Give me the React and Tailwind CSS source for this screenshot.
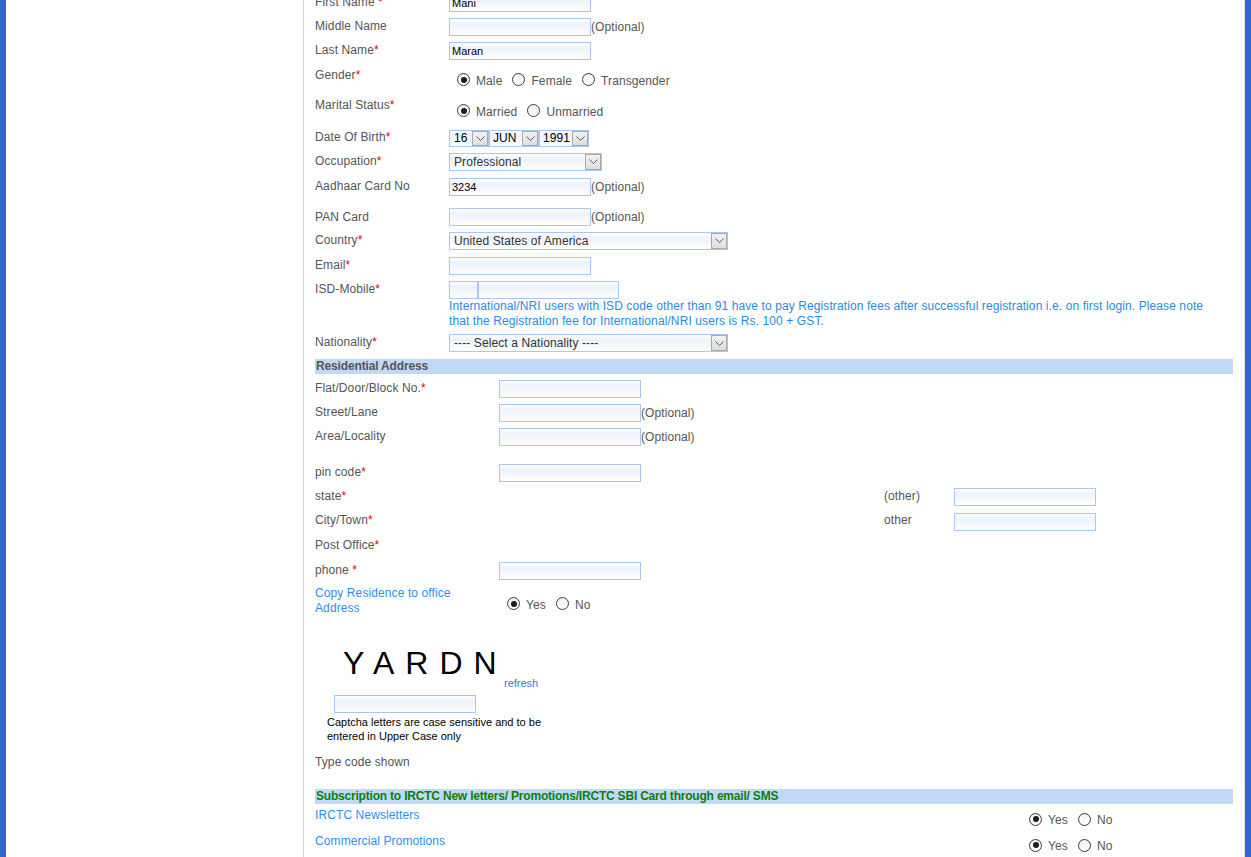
import React from 'react';

const Req = () => <span className="text-[#e60000]">*</span>;

const Input = ({ value = '', className = 'w-[142px]' }) => (
    <div className={`h-[18px] border border-[#a9c7ef] bg-linear-to-b from-white via-[#edf2fb] via-30% to-white pl-[2px] text-[11px] leading-[16px] tracking-normal text-black ${className}`}>
        {value}
    </div>
);

const Chevron = () => (
    <svg width="9" height="5" viewBox="0 0 9 5" fill="none">
        <path d="M0.5 0.5L4.5 4.5L8.5 0.5" stroke="#5a5a5a" strokeWidth="1" />
    </svg>
);

const Select = ({ value, className, textClass = 'pl-[4px] leading-[16px]' }) => (
    <div className={`flex border border-[#a9c7ef] bg-linear-to-b from-white via-[#edf2fb] via-30% to-white ${className}`}>
        <div className={`flex-1 overflow-hidden whitespace-nowrap text-[12px] text-[#333] ${textClass}`}>{value}</div>
        <div className="flex w-[16px] items-center justify-center border border-[#a8a8a8] bg-linear-to-b from-[#f2f2f2] to-[#dedede]">
            <Chevron />
        </div>
    </div>
);

const Radio = ({ checked, label }) => (
    <div className="flex items-center">
        <span className="mb-[2px] flex h-[13px] w-[13px] items-center justify-center rounded-full border border-[#3c3c3c] bg-linear-to-b from-[#f0f0f0] to-white">
            {checked && <span className="h-[6px] w-[6px] rounded-full bg-[#1c1c1c]" />}
        </span>
        <span className="ml-[6px] leading-[16px] text-[#555]">{label}</span>
    </div>
);

const Optional = () => <span className="leading-[18px] text-[#555]">(Optional)</span>;

// one table row: label cell + field cell
const Row = ({ className = 'h-[24px]', labelClass = 'w-[134px] pt-[2px]', fieldClass = 'pt-[2px]', label, children }) => (
    <div className={`flex ${className}`}>
        <div className={`shrink-0 leading-[16px] text-[#555] ${labelClass}`}>{label}</div>
        <div className={`flex items-start ${fieldClass}`}>{children}</div>
    </div>
);

const App = () => {
    return (
        <div className="flex h-[857px] overflow-hidden bg-white font-['Liberation_Sans',Arial,sans-serif] text-[12px] tracking-[0.1px]">
            <div className="w-[6px] shrink-0 bg-[#3366cc]" />
            <div className="w-[297px] shrink-0" />

            <div className="flex w-[942px] shrink-0 flex-col border-l border-r border-l-[#c5d6ec] border-r-[#dedede] px-[11px]">
                {/* Personal details */}
                <Row className="-mt-[7px] h-[24px]" labelClass="w-[134px] pt-[1px]" fieldClass="pt-[1px]" label={<>First Name <Req /></>}>
                    <Input value="Mani" />
                </Row>
                <Row labelClass="w-[134px] pt-[1px]" fieldClass="pt-[1px]" label="Middle Name">
                    <Input />
                    <Optional />
                </Row>
                <Row labelClass="w-[134px] pt-[1px]" fieldClass="pt-[1px]" label={<>Last Name<Req /></>}>
                    <Input value="Maran" />
                </Row>
                <Row className="h-[30px]" fieldClass="ml-[8px] pt-[8px]" label={<>Gender<Req /></>}>
                    <div className="flex gap-[10px]">
                        <Radio checked label="Male" />
                        <Radio label="Female" />
                        <Radio label="Transgender" />
                    </div>
                </Row>
                <Row className="h-[32px]" fieldClass="ml-[8px] pt-[9px]" label={<>Marital Status<Req /></>}>
                    <div className="flex gap-[10px]">
                        <Radio checked label="Married" />
                        <Radio label="Unmarried" />
                    </div>
                </Row>
                <Row fieldClass="pt-[3px]" label={<>Date Of Birth<Req /></>}>
                    <Select value="16" className="h-[17px] w-[40px]" textClass="pl-[4px] leading-[15px] text-black" />
                    <Select value="JUN" className="h-[17px] w-[50px]" textClass="pl-[3px] leading-[15px] text-black" />
                    <Select value="1991" className="h-[17px] w-[50px]" textClass="pl-[3px] leading-[15px] text-black" />
                </Row>
                <Row className="h-[25px]" label={<>Occupation<Req /></>}>
                    <Select value="Professional" className="h-[18px] w-[153px]" />
                </Row>
                <Row className="h-[31px]" label="Aadhaar Card No">
                    <Input value="3234" />
                    <Optional />
                </Row>
                <Row className="h-[23px]" fieldClass="pt-[1px]" label="PAN Card">
                    <Input />
                    <Optional />
                </Row>
                <Row className="h-[25px]" label={<>Country<Req /></>}>
                    <Select value="United States of America" className="h-[18px] w-[279px]" />
                </Row>
                <Row label={<>Email<Req /></>}>
                    <Input />
                </Row>
                <Row className="h-[54px]" fieldClass="flex-col pt-[2px]" label={<>ISD-Mobile<Req /></>}>
                    <div className="flex">
                        <Input className="w-[29px]" />
                        <Input className="w-[141px]" />
                    </div>
                    <div className="leading-[15px] text-[#2a8ae6]">
                        International/NRI users with ISD code other than 91 have to pay Registration fees after successful registration i.e. on first login. Please note
                        <br />
                        that the Registration fee for International/NRI users is Rs. 100 + GST.
                    </div>
                </Row>
                <Row className="h-[27px]" label={<>Nationality<Req /></>}>
                    <Select value="---- Select a Nationality ----" className="h-[18px] w-[279px]" />
                </Row>

                {/* Residential address */}
                <div className="mb-[4px] h-[15px] bg-[#c1d9f6] pl-[1px] font-bold leading-[15px] tracking-[-0.15px] text-[#555]">Residential Address</div>
                <Row labelClass="w-[184px] pt-[2px]" label={<>Flat/Door/Block No.<Req /></>}>
                    <Input />
                </Row>
                <Row labelClass="w-[184px] pt-[2px]" label="Street/Lane">
                    <Input />
                    <Optional />
                </Row>
                <Row className="h-[36px]" labelClass="w-[184px] pt-[2px]" label="Area/Locality">
                    <Input />
                    <Optional />
                </Row>
                <Row labelClass="w-[184px] pt-[2px]" label={<>pin code<Req /></>}>
                    <Input />
                </Row>
                <Row labelClass="w-[184px] pt-[2px]" label={<>state<Req /></>}>
                    <div className="w-[385px]" />
                    <div className="w-[70px] leading-[16px] text-[#555]">(other)</div>
                    <Input />
                </Row>
                <Row className="h-[25px]" labelClass="w-[184px] pt-[2px]" label={<>City/Town<Req /></>}>
                    <div className="w-[385px]" />
                    <div className="w-[70px] leading-[16px] text-[#555]">other</div>
                    <Input className="mt-[1px] w-[142px]" />
                </Row>
                <Row className="h-[25px]" labelClass="w-[184px] pt-[2px]" label={<>Post Office<Req /></>} />
                <Row className="h-[26px]" labelClass="w-[184px] pt-[2px]" label={<>phone <Req /></>}>
                    <Input />
                </Row>
                <div className="flex h-[30px]">
                    <div className="w-[184px] shrink-0">
                        <div className="w-[150px] leading-[15px] text-[#2f8ef0]">Copy Residence to office Address</div>
                    </div>
                    <div className="ml-[8px] flex gap-[10px] pt-[7px]">
                        <Radio checked label="Yes" />
                        <Radio label="No" />
                    </div>
                </div>

                {/* Captcha */}
                <div className="mt-[31px] pl-[12px]">
                    <div className="flex h-[48px] items-start">
                        <div className="w-[177px] shrink-0 whitespace-nowrap pl-[16px] text-[32px] font-light leading-[32px] tracking-[11px] text-black">YARDN</div>
                        <div className="pt-[30px] text-[11px] leading-[13px] tracking-normal text-[#1f80dc]">refresh</div>
                    </div>
                    <Input className="ml-[7px] w-[142px]" />
                    <div className="mt-[2px] w-[220px] text-[11px] leading-[14px] tracking-normal text-black">
                        Captcha letters are case sensitive and to be entered in Upper Case only
                    </div>
                </div>
                <div className="mt-[11px] leading-[16px] text-[#555]">Type code shown</div>

                {/* Subscriptions */}
                <div className="mt-[19px] h-[15px] bg-[#c1d9f6] pl-[1px] font-bold leading-[15px] tracking-[-0.2px] text-[#0a800a]">
                    Subscription to IRCTC New letters/ Promotions/IRCTC SBI Card through email/ SMS
                </div>
                <div className="mt-[1px] flex h-[26px]">
                    <div className="flex-1 pt-[2px] leading-[16px] text-[#2f8ef0]">IRCTC Newsletters</div>
                    <div className="flex w-[204px] gap-[10px] pt-[4px]">
                        <Radio checked label="Yes" />
                        <Radio label="No" />
                    </div>
                </div>
                <div className="flex h-[26px]">
                    <div className="flex-1 pt-[2px] leading-[16px] text-[#2f8ef0]">Commercial Promotions</div>
                    <div className="flex w-[204px] gap-[10px] pt-[4px]">
                        <Radio checked label="Yes" />
                        <Radio label="No" />
                    </div>
                </div>
            </div>

            <div className="flex-1 bg-[#3366cc]" />
        </div>
    );
};

export default App;
